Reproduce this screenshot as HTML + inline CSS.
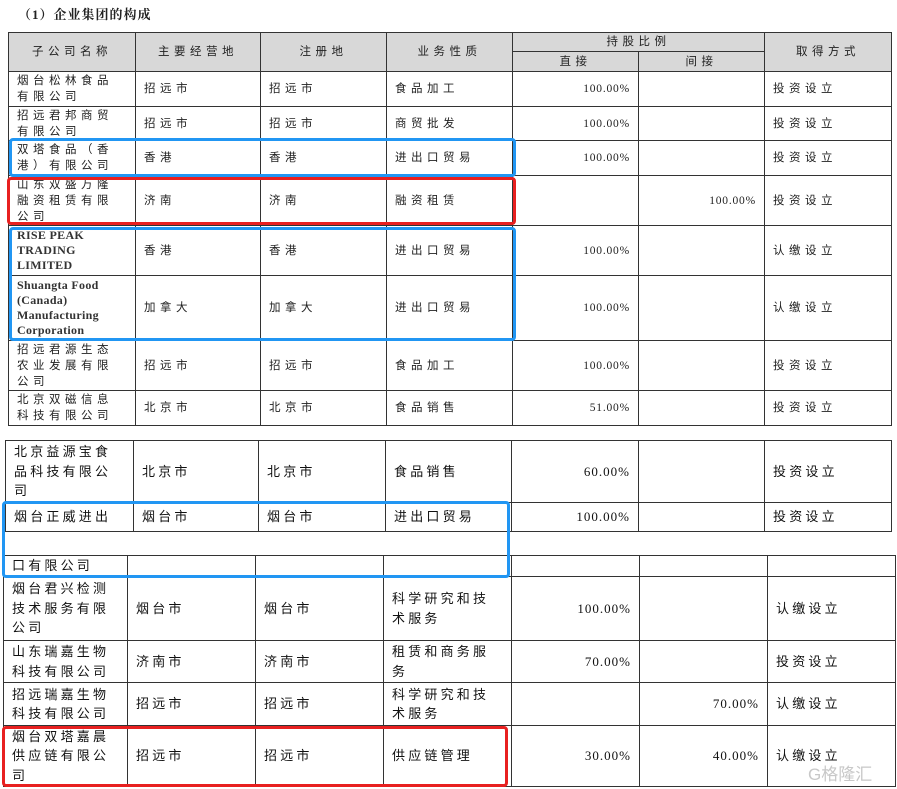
<!DOCTYPE html>
<html><head><meta charset="utf-8">
<style>
body{margin:0;width:897px;height:789px;background:#fff;position:relative;overflow:hidden;font-family:"Liberation Serif","Noto Sans CJK SC",serif;color:#222}
table{position:absolute;border-collapse:collapse;table-layout:fixed}
td{border:1px solid #333;padding:0 8px;font-size:11.5px;letter-spacing:4.5px;line-height:16px;vertical-align:middle;overflow:hidden;white-space:nowrap}
td.w{white-space:normal;word-break:break-all}
td.r{text-align:right;letter-spacing:0.8px;font-size:11.5px}
.h td{background:#d8d8d8;text-align:center}
td.en{font-family:"Liberation Serif",serif;letter-spacing:0.3px;font-size:12px;line-height:15px;word-break:normal;font-weight:bold;color:#333}
.b td{font-size:13px;letter-spacing:3.2px;line-height:19.5px;color:#111}
.b td.r{font-size:13px;letter-spacing:1px}
.box{position:absolute;border:3px solid #2196f3;border-radius:4px;box-sizing:border-box}
.red{border-color:#e82020}
</style></head><body>
<div style="position:absolute;left:18px;top:4px;font-size:13px;font-weight:bold;font-family:'Liberation Serif','Noto Serif CJK SC',serif;letter-spacing:1px">（1）企业集团的构成</div>

<table style="left:8px;top:32px;width:883px">
<colgroup><col style="width:127px"><col style="width:125px"><col style="width:126px"><col style="width:126px"><col style="width:126px"><col style="width:126px"><col style="width:127px"></colgroup>
<tr class="h" style="height:19px"><td rowspan="2">子公司名称</td><td rowspan="2">主要经营地</td><td rowspan="2">注册地</td><td rowspan="2">业务性质</td><td colspan="2">持股比例</td><td rowspan="2">取得方式</td></tr>
<tr class="h" style="height:20px"><td>直接</td><td>间接</td></tr>
<tr style="height:35px"><td class="w">烟台松林食品有限公司</td><td>招远市</td><td>招远市</td><td>食品加工</td><td class="r">100.00%</td><td></td><td>投资设立</td></tr>
<tr style="height:34px"><td class="w">招远君邦商贸有限公司</td><td>招远市</td><td>招远市</td><td>商贸批发</td><td class="r">100.00%</td><td></td><td>投资设立</td></tr>
<tr style="height:35px"><td class="w">双塔食品（香港）有限公司</td><td>香港</td><td>香港</td><td>进出口贸易</td><td class="r">100.00%</td><td></td><td>投资设立</td></tr>
<tr style="height:50px"><td class="w">山东双盛万隆融资租赁有限公司</td><td>济南</td><td>济南</td><td>融资租赁</td><td></td><td class="r">100.00%</td><td>投资设立</td></tr>
<tr style="height:50px"><td class="w en">RISE PEAK TRADING LIMITED</td><td>香港</td><td>香港</td><td>进出口贸易</td><td class="r">100.00%</td><td></td><td>认缴设立</td></tr>
<tr style="height:65px"><td class="w en">Shuangta Food (Canada) Manufacturing Corporation</td><td>加拿大</td><td>加拿大</td><td>进出口贸易</td><td class="r">100.00%</td><td></td><td>认缴设立</td></tr>
<tr style="height:50px"><td class="w">招远君源生态农业发展有限公司</td><td>招远市</td><td>招远市</td><td>食品加工</td><td class="r">100.00%</td><td></td><td>投资设立</td></tr>
<tr style="height:35px"><td class="w">北京双磁信息科技有限公司</td><td>北京市</td><td>北京市</td><td>食品销售</td><td class="r">51.00%</td><td></td><td>投资设立</td></tr>
</table>

<table class="b" style="left:5px;top:440px;width:886px">
<colgroup><col style="width:128px"><col style="width:125px"><col style="width:127px"><col style="width:126px"><col style="width:127px"><col style="width:126px"><col style="width:127px"></colgroup>
<tr style="height:62px"><td class="w">北京益源宝食品科技有限公司</td><td>北京市</td><td>北京市</td><td>食品销售</td><td class="r">60.00%</td><td></td><td>投资设立</td></tr>
<tr style="height:29px"><td>烟台正威进出</td><td>烟台市</td><td>烟台市</td><td>进出口贸易</td><td class="r">100.00%</td><td></td><td>投资设立</td></tr>
</table>

<table class="b" style="left:3px;top:555px;width:892px">
<colgroup><col style="width:124px"><col style="width:128px"><col style="width:128px"><col style="width:128px"><col style="width:128px"><col style="width:128px"><col style="width:128px"></colgroup>
<tr style="height:21px"><td style="line-height:18px">口有限公司</td><td></td><td></td><td></td><td></td><td></td><td></td></tr>
<tr style="height:64px"><td class="w">烟台君兴检测技术服务有限公司</td><td>烟台市</td><td>烟台市</td><td class="w">科学研究和技术服务</td><td class="r">100.00%</td><td></td><td>认缴设立</td></tr>
<tr style="height:42px"><td class="w">山东瑞嘉生物科技有限公司</td><td>济南市</td><td>济南市</td><td class="w">租赁和商务服务</td><td class="r">70.00%</td><td></td><td>投资设立</td></tr>
<tr style="height:43px"><td class="w">招远瑞嘉生物科技有限公司</td><td>招远市</td><td>招远市</td><td class="w">科学研究和技术服务</td><td></td><td class="r">70.00%</td><td>认缴设立</td></tr>
<tr style="height:61px"><td class="w">烟台双塔嘉晨供应链有限公司</td><td>招远市</td><td>招远市</td><td>供应链管理</td><td class="r">30.00%</td><td class="r">40.00%</td><td>认缴设立</td></tr>
</table>

<div class="box" style="left:9px;top:138px;width:507px;height:39px"></div>
<div class="box red" style="left:7px;top:177px;width:509px;height:48px"></div>
<div class="box" style="left:9px;top:227px;width:507px;height:114px"></div>
<div class="box" style="left:2px;top:501px;width:508px;height:77px"></div>
<div class="box red" style="left:2px;top:726px;width:506px;height:61px"></div>
<div style="position:absolute;left:808px;top:760px;font-size:17px;color:#c8c8c8;font-family:'Liberation Sans','Noto Sans CJK SC',sans-serif">G格隆汇</div>
</body></html>
